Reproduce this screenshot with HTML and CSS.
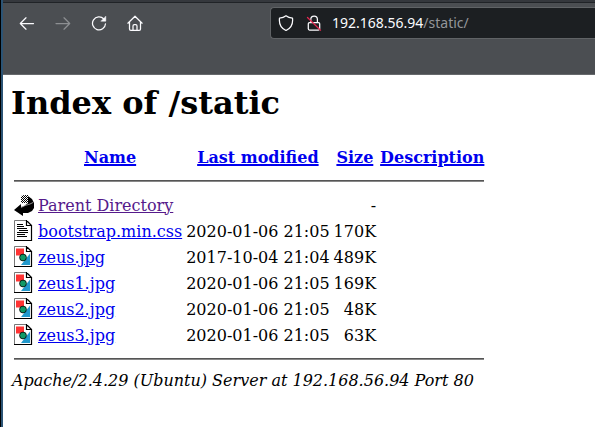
FILE: index.html
```html
<!DOCTYPE html>
<html lang="en">
<head>
<meta charset="utf-8">
<title>Index of /static</title>
<link rel="stylesheet" href="styles.css">
</head>
<body>
<svg class="defs" width="0" height="0">
  <defs>
    <pattern id="dither" width="2" height="2" patternUnits="userSpaceOnUse">
      <path d="M0 0h1v1H0zM1 1h1v1H1z" fill="#000" shape-rendering="crispEdges"/>
    </pattern>
  </defs>
  <symbol id="back" viewBox="0 0 20 22">
    <path d="M7 2l3-1h4v8H7z" fill="url(#dither)"/>
    <path d="M14 2l4 3 2 4v5l-2 3-4 2H9v3L0 16l7-6v3l3-1 4-3z" fill="#000"/>
    <path d="M7 13.500l4-2 5-1.500 3-1.500" fill="none" stroke="#ccc" stroke-width=".7"/>
  </symbol>
  <symbol id="text" viewBox="0 0 20 22">
    <path d="M.5 .5h12l5 5v15H.5z" fill="#fff" stroke="#777"/>
    <path d="M0 20.500h17.500V5.500h-5V0M12.500 .5l5 5" fill="none" stroke="#000" stroke-width="1.200"/>
    <path d="M3 4.500h6M3 6.500h7M3 8.500h10M5 10.500h9M3 12.500h11M3 14.500h8M3 16.500h10" stroke="#000" shape-rendering="crispEdges"/>
  </symbol>
  <symbol id="image" viewBox="0 0 20 22">
    <path d="M.5 .5h12l5 5v15H.5z" fill="#fff" stroke="#777"/>
    <path d="M0 20.500h17.500V5.500h-5V0M12.500 .5l5 5" fill="none" stroke="#000" stroke-width="1.200"/>
    <path d="M2 2.500h8v7H2z" fill="#f33"/>
    <path d="M16 7.500V19H7z" fill="#29c"/>
    <circle cx="9" cy="11.500" r="3.400" fill="#196" stroke="#000" stroke-width=".8"/>
  </symbol>
</svg>
<div class="window">
  <header class="chrome">
    <nav class="toolbar">
      <div class="buttons">
        <svg class="icon" viewBox="0 0 16 16"><path d="M14.500 8.500H1.500M7 2.800L1.300 8.500 7 14.200"/></svg>
        <svg class="icon disabled" viewBox="0 0 16 16"><path d="M1 8.500h13.500M9 2.800l5.700 5.700L9 14.200"/></svg>
        <svg class="icon" viewBox="0 0 16 16"><path d="M12.800 4A6.500 6.500 0 1 0 14.500 8.800"/><path class="solid" d="M14.800 1.500v4.700h-4.700z"/></svg>
        <svg class="icon" viewBox="0 0 16 16"><path d="M.9 8.200L8 1.200l7.100 7M2.500 7v7q0 1.300 1.300 1.300h8.400q1.300 0 1.300-1.300V7M6 15v-4q0-1.300 1.300-1.300h1.400Q10 9.700 10 11v4"/></svg>
      </div>
      <div class="urlbar">
        <svg class="icon" viewBox="0 0 16 16"><path d="M8 .8Q10.500 2.900 14.500 3.100C15.200 9 12.500 13.500 8 15.500 3.500 13.500.8 9 1.500 3.100 5.500 2.900 8 .8 8 .8z"/></svg>
        <svg class="icon lock" viewBox="0 0 16 16"><path d="M4.800 7V4.500a3.300 3.300 0 0 1 6.600 0V7M3.500 7.500h9q1.200 0 1.200 1.200v5.100q0 1.200-1.200 1.200h-9q-1.200 0-1.200-1.200V8.700q0-1.200 1.200-1.200z"/><path class="strike" d="M1.500 2.500l13 12.700"/></svg>
        <span class="url">192.168.56.94<span class="path">/static/</span></span>
      </div>
    </nav>
  </header>
  <main class="page">
    <h1>Index of /static</h1>
    <table>
      <tr class="head"><th class="pic"></th><th><a href="#">Name</a></th><th><a href="#">Last modified</a></th><th><a href="#">Size</a></th><th><a href="#">Description</a></th></tr>
      <tr><th colspan="5"><hr></th></tr>
      <tr><td><svg class="file"><use href="#back"/></svg></td><td><a class="visited" href="#">Parent Directory</a></td><td></td><td class="num">-</td><td></td></tr>
      <tr><td><svg class="file"><use href="#text"/></svg></td><td><a href="#">bootstrap.min.css</a></td><td class="num">2020-01-06 21:05</td><td class="num">170K</td><td></td></tr>
      <tr><td><svg class="file"><use href="#image"/></svg></td><td><a href="#">zeus.jpg</a></td><td class="num">2017-10-04 21:04</td><td class="num">489K</td><td></td></tr>
      <tr><td><svg class="file"><use href="#image"/></svg></td><td><a href="#">zeus1.jpg</a></td><td class="num">2020-01-06 21:05</td><td class="num">169K</td><td></td></tr>
      <tr><td><svg class="file"><use href="#image"/></svg></td><td><a href="#">zeus2.jpg</a></td><td class="num">2020-01-06 21:05</td><td class="num">48K</td><td></td></tr>
      <tr><td><svg class="file"><use href="#image"/></svg></td><td><a href="#">zeus3.jpg</a></td><td class="num">2020-01-06 21:05</td><td class="num">63K</td><td></td></tr>
      <tr><th colspan="5"><hr></th></tr>
    </table>
    <address>Apache/2.4.29 (Ubuntu) Server at 192.168.56.94 Port 80</address>
  </main>
</div>
</body>
</html>
```
FILE: styles.css
```css
* { box-sizing: border-box; }
body { margin: 0; overflow: hidden; background: #000; }
.defs { position: absolute; }
.window {
  height: 427px;
  margin-left: 1px;
  border-left: 2px solid #2c5475;
  background: #fff;
}
.chrome {
  height: 75px;
  background: #4b4e52;
  border-top: 2px solid #35383d;
  border-bottom: 1px solid #66696c;
}
.toolbar {
  display: flex;
  height: 43px;
  padding-top: 4px;
  border-top: 1px solid #202327;
}
.buttons {
  display: flex;
  align-items: center;
  gap: 20px;
  height: 32px;
  padding-left: 16px;
  width: 267px;
}
.icon {
  width: 16px;
  height: 16px;
  flex: none;
  fill: none;
  stroke: #fbfbfe;
  stroke-width: 1.25;
  stroke-linecap: round;
  stroke-linejoin: round;
}
.icon .solid { fill: #fbfbfe; stroke-width: .5; }
.disabled { stroke: #8d8f92; }
.icon .strike { stroke: #e22850; }
.urlbar {
  display: flex;
  align-items: center;
  flex: 1;
  height: 32px;
  padding-left: 7px;
  background: #1c1f22;
  border: 1px solid #606366;
  border-right: 0;
  border-radius: 4px 0 0 4px;
}
.lock { margin-left: 12px; }
.url {
  margin: -1px 0 0 10px;
  font: 14px/20px "Noto Sans", sans-serif;
  color: #fbfbfe;
  white-space: nowrap;
}
.path { color: #94969a; }
.page {
  padding: 9px 8px 0;
  font: 16px/19px "DejaVu Serif", serif;
  color: #000;
}
h1 { margin: 0 0 21px; font-size: 32px; line-height: 38px; }
table { border-spacing: 2px; border-collapse: separate; }
th, td { padding: 1px; white-space: nowrap; }
.head th { height: 24px; }
.head a { text-decoration-thickness: 2px; }
.pic { width: 22px; }
.num { text-align: right; }
a { color: #0000ee; }
.visited { color: #551a8b; }
hr {
  height: 2px;
  margin: 8px 0;
  border: 0;
  border-top: 1px solid #555;
  border-bottom: 1px solid #888;
}
.file { display: block; width: 20px; height: 22px; }
address { padding-left: 1px; font-style: italic; }
```
